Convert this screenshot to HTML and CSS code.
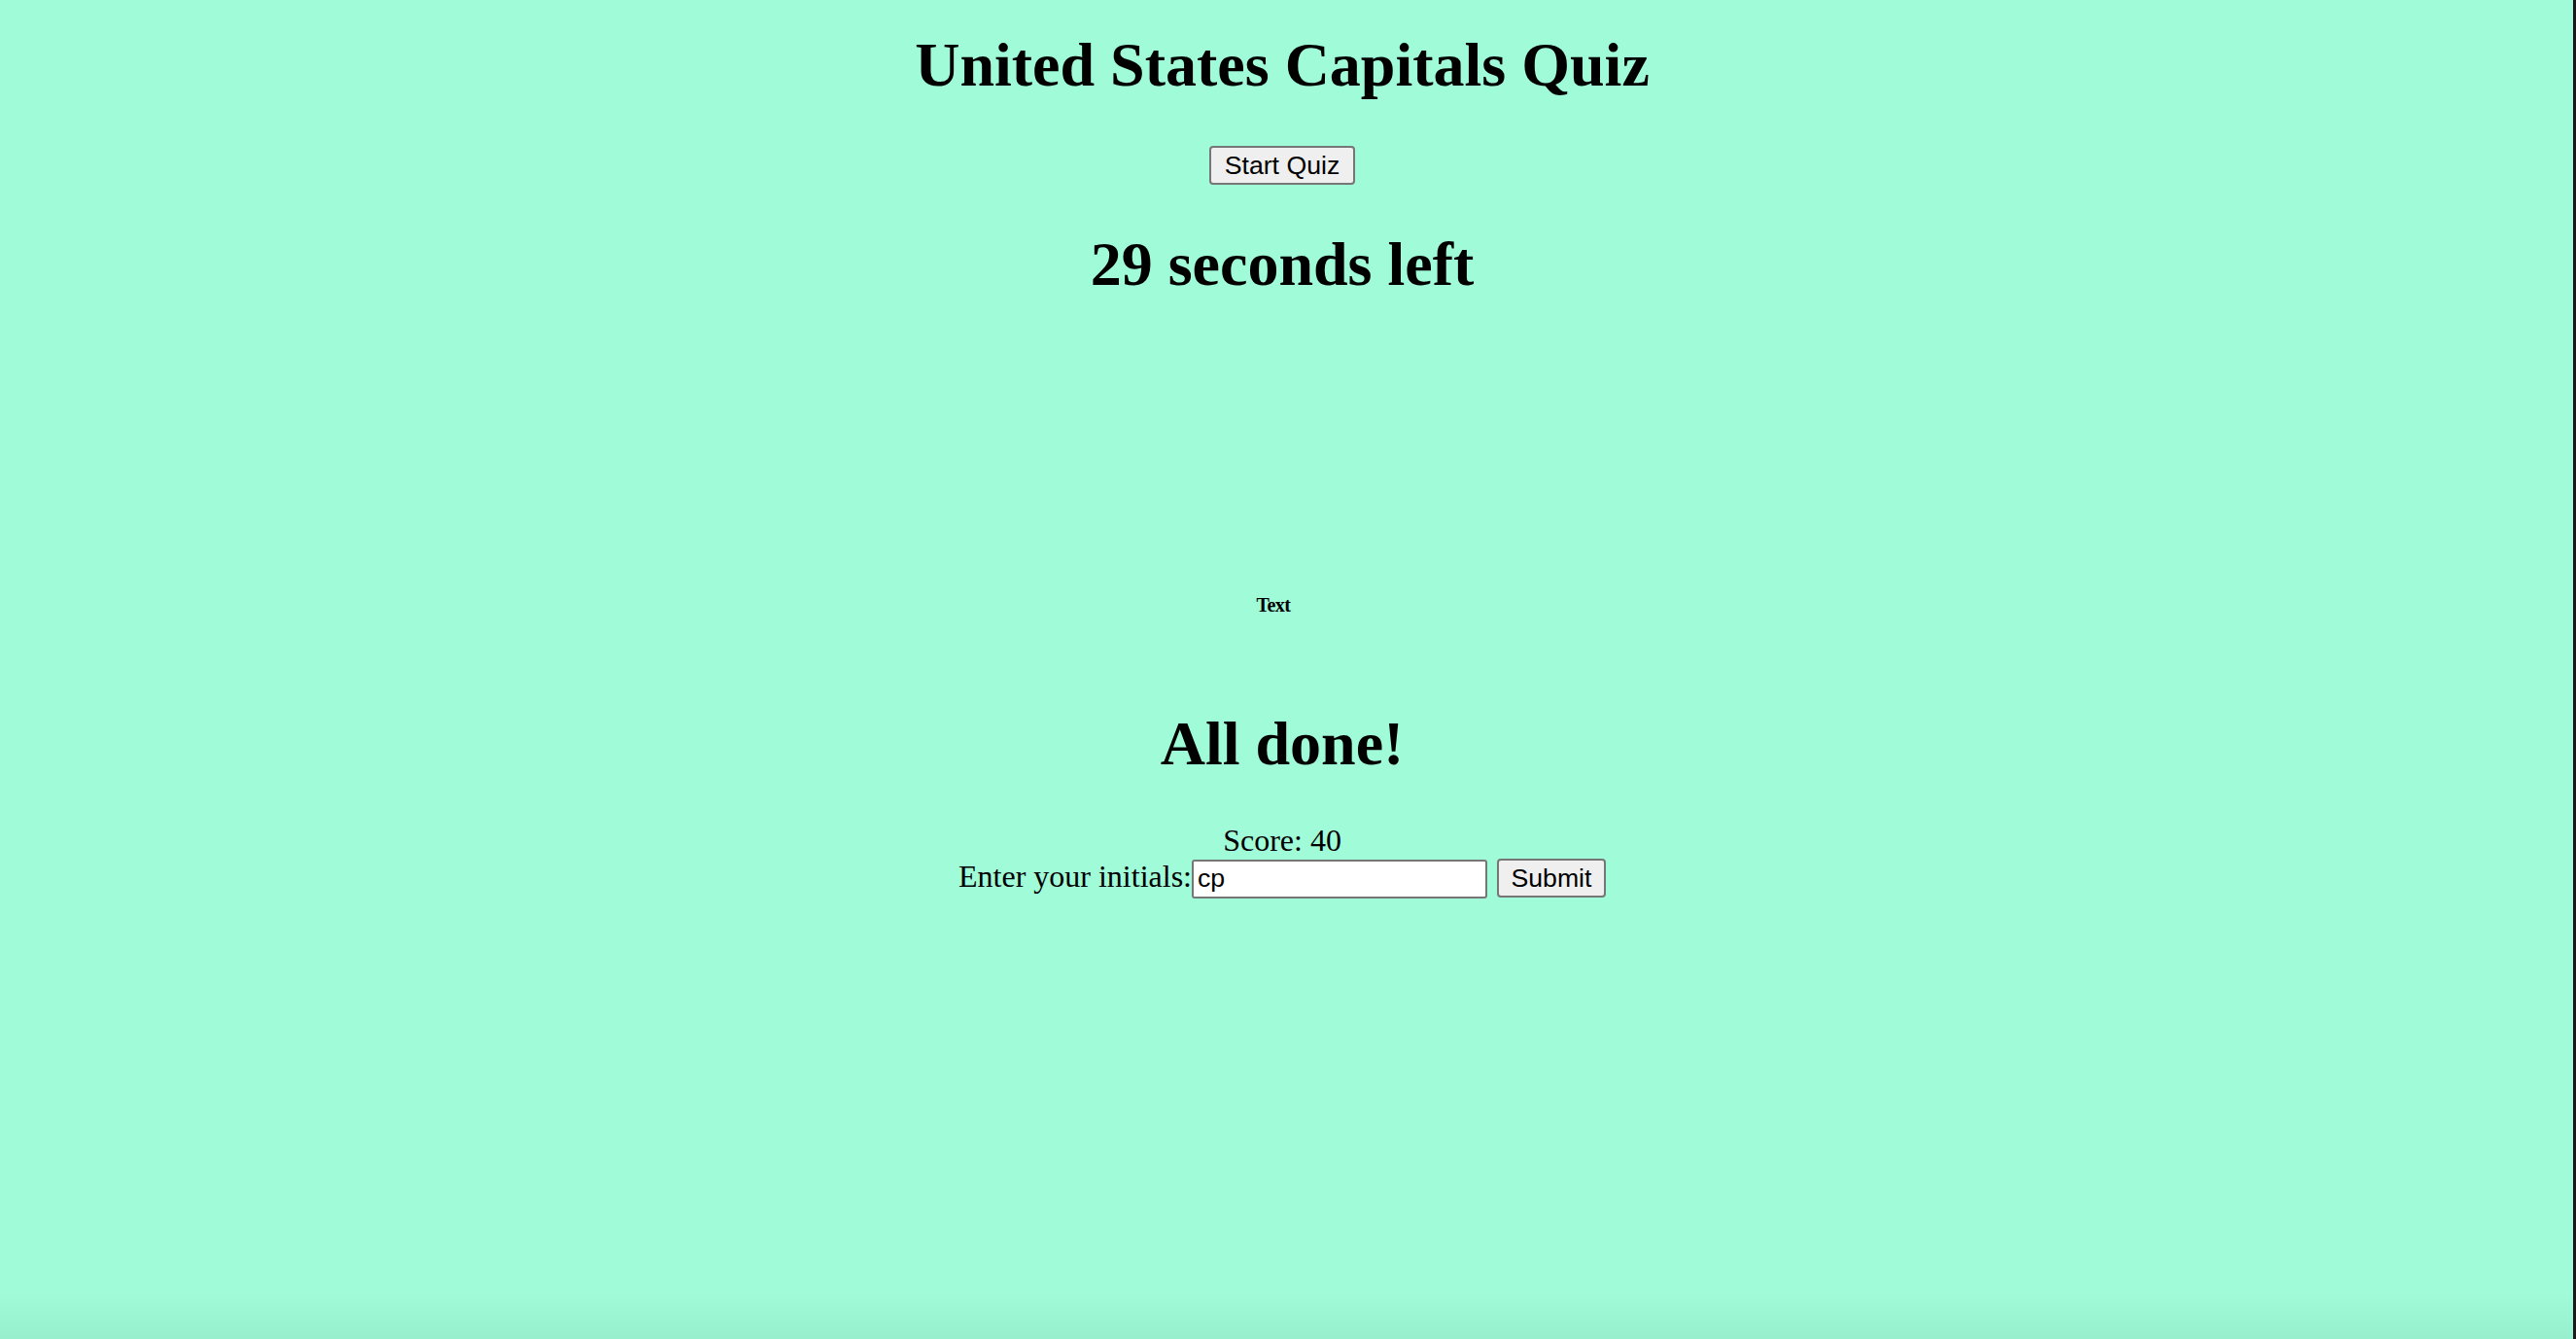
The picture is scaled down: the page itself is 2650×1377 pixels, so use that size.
FILE: index.html
```html
<!DOCTYPE html>
<html lang="en">
<head>
<meta charset="utf-8">
<title>United States Capitals Quiz</title>
<link rel="stylesheet" href="styles.css">
</head>
<body>
<header class="top">
  <h1 class="title">United States Capitals Quiz</h1>
  <div class="start-row"><button class="btn btn-start" type="button">Start Quiz</button></div>
  <h1 class="timer">29 seconds left</h1>
</header>
<section class="question">
  <h6 class="q-text">Text</h6>
</section>
<section class="done">
  <h1 class="done-title">All done!</h1>
  <p class="score">Score: 40</p>
  <form class="initials-form">
    <label class="initials-label" for="initials">Enter your initials:</label>
    <input class="initials-input" id="initials" type="text" value="cp">
    <button class="btn btn-submit" type="button">Submit</button>
  </form>
</section>
</body>
</html>
```
FILE: styles.css
```css
html {
  height: 100%;
  background: linear-gradient(to bottom, #a0fbd8 0, #a0fbd8 1330px, #97efcd 100%);
  border-right: 3px solid #1d191b;
  box-sizing: border-box;
}
body {
  margin: 0;
  padding: 0 9px 0 0;
  font-family: "Liberation Serif", "Times New Roman", serif;
  font-size: 32px;
  line-height: 37px;
  color: #000;
  text-align: center;
}
h1 {
  font-size: 64px;
  line-height: 74px;
  font-weight: bold;
  margin: 0;
}
.title {
  padding-top: 30px;
  margin-bottom: 46px;
}
.start-row {
  display: flex;
  justify-content: center;
}
.btn {
  font-family: "Liberation Sans", Arial, sans-serif;
  font-size: 26.67px;
  line-height: 30px;
  height: 40px;
  box-sizing: border-box;
  padding: 0;
  background: #efefef;
  color: #000;
  border: 2px solid #767676;
  border-radius: 4px;
}
.btn-start {
  width: 150px;
}
.timer {
  margin-top: 45px;
}
.question {
  margin-top: 302px;
}
.q-text {
  margin: 0;
  padding-right: 18px;
  font-size: 20px;
  line-height: 23px;
  font-weight: bold;
  letter-spacing: -0.5px;
}
.done-title {
  margin-top: 94px;
}
.score {
  margin: 44px 0 0;
}
.initials-form {
  display: flex;
  justify-content: center;
  align-items: baseline;
  margin: 0;
}
.initials-label {
  font-size: 32px;
  line-height: 37px;
}
.initials-input {
  width: 304px;
  height: 40px;
  box-sizing: border-box;
  padding: 0 4px;
  font-family: "Liberation Sans", Arial, sans-serif;
  font-size: 26.67px;
  background: #fff;
  color: #000;
  border: 2px solid #767676;
  border-radius: 3px;
  margin: 0;
}
.btn-submit {
  width: 112px;
  margin-left: 10px;
}
```
